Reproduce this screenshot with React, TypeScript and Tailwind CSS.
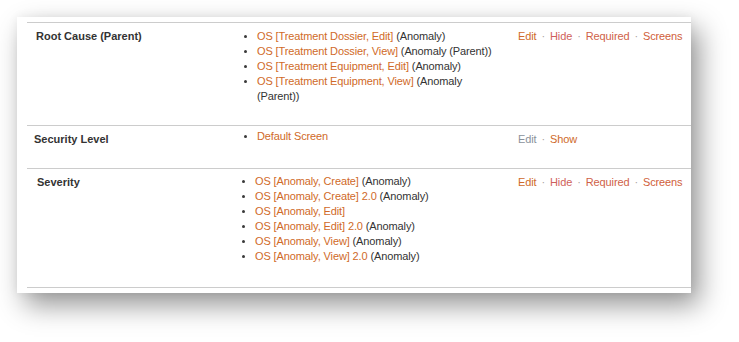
import React from "react";

type Item = { link: string; rest?: string };

const LINK = "text-[#d06a28]";

function Bullets({ items, shift = 0 }: { items: Item[]; shift?: number }) {
  return (
    <ul className={shift ? "w-[282px] -ml-[2px]" : "w-[282px]"}>
      {items.map((it, i) => (
        <li key={i} className="flex items-start">
          <span className="w-[21px] shrink-0 flex">
            <span className="mt-[6px] ml-[8px] w-[3px] h-[3px] rounded-full bg-[#3a3a3a]" />
          </span>
          <span className="max-w-[244px] text-[#333]">
            <span className={LINK}>{it.link}</span>
            {it.rest ? " " + it.rest : ""}
          </span>
        </li>
      ))}
    </ul>
  );
}

function Dot() {
  return <span className="mx-[5px] text-[#a8a0a0]">·</span>;
}

function FullActions() {
  return (
    <div className="flex">
      <span className="text-[#cf6a2a]">Edit</span>
      <Dot />
      <span className="text-[#cf5f5c]">Hide</span>
      <Dot />
      <span className="text-[#cf5f48]">Required</span>
      <Dot />
      <span className="text-[#d0603a]">Screens</span>
    </div>
  );
}

export default function App() {
  return (
    <div
      className="w-[739px] h-[342px] bg-white overflow-hidden pl-[17px] pt-[17px] text-[11px] leading-[15px] tracking-[-0.12px]"
      style={{ fontFamily: '"Liberation Sans", Arial, sans-serif' }}
    >
      <div className="w-[674px] h-[276px] bg-white pl-[10px] pt-[5px] pb-[5px] shadow-[8px_12px_26px_rgba(0,0,0,0.42),0_0_10px_rgba(0,0,0,0.06)]">
        <div className="border-t border-[#cccccc]">
          {/* Row 1 */}
          <div className="flex h-[103px] border-b border-[#cccccc] pt-[6px]">
            <div className="w-[209px] pl-[9px] font-bold text-[#333] tracking-normal">Root Cause (Parent)</div>
            <Bullets
              items={[
                { link: "OS [Treatment Dossier, Edit]", rest: "(Anomaly)" },
                { link: "OS [Treatment Dossier, View]", rest: "(Anomaly (Parent))" },
                { link: "OS [Treatment Equipment, Edit]", rest: "(Anomaly)" },
                { link: "OS [Treatment Equipment, View]", rest: "(Anomaly (Parent))" },
              ]}
            />
            <FullActions />
          </div>
          {/* Row 2 */}
          <div className="flex h-[43px] border-b border-[#cccccc]">
            <div className="w-[209px] pl-[7px] pt-[6px] font-bold text-[#333] tracking-normal">Security Level</div>
            <div className="pt-[3px]">
              <Bullets items={[{ link: "Default Screen" }]} />
            </div>
            <div className="pt-[6px] flex">
              <span className="text-[#8b919b]">Edit</span>
              <Dot />
              <span className="text-[#cf6a2a]">Show</span>
            </div>
          </div>
          {/* Row 3 */}
          <div className="flex h-[119px] border-b border-[#cccccc]">
            <div className="w-[209px] pl-[10px] pt-[6px] font-bold text-[#333] tracking-normal">Severity</div>
            <div className="pt-[5px]">
              <Bullets
                shift={1}
                items={[
                  { link: "OS [Anomaly, Create]", rest: "(Anomaly)" },
                  { link: "OS [Anomaly, Create] 2.0", rest: "(Anomaly)" },
                  { link: "OS [Anomaly, Edit]" },
                  { link: "OS [Anomaly, Edit] 2.0", rest: "(Anomaly)" },
                  { link: "OS [Anomaly, View]", rest: "(Anomaly)" },
                  { link: "OS [Anomaly, View] 2.0", rest: "(Anomaly)" },
                ]}
              />
            </div>
            <div className="pt-[6px] ml-[2px]">
              <FullActions />
            </div>
          </div>
        </div>
      </div>
    </div>
  );
}
